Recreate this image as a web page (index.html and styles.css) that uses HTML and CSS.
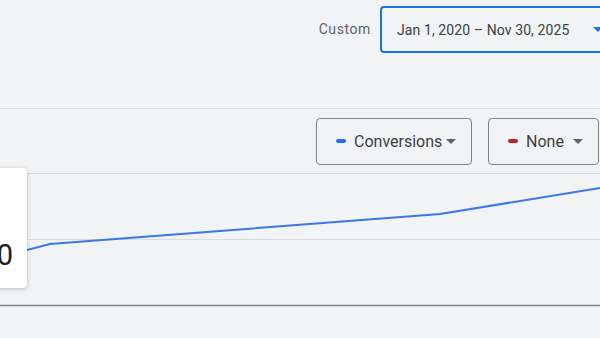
FILE: index.html
```html
<!DOCTYPE html>
<html lang="en">
<head>
    <meta charset="UTF-8">
    <meta name="viewport" content="width=device-width, initial-scale=1.0">
    <title>Conversions report</title>
    <link rel="stylesheet" href="styles.css">
</head>
<body>
    <div class="topbar">
        <span class="range-label">Custom</span>
        <div class="date-picker">
            <span>Jan 1, 2020 – Nov 30, 2025</span>
            <span class="caret caret-blue"></span>
        </div>
    </div>

    <div class="chart-panel">
        <div class="controls">
            <div class="metric-select">
                <span class="swatch swatch-blue"></span>
                <span>Conversions</span>
                <span class="caret"></span>
            </div>
            <div class="metric-select metric-none">
                <span class="swatch swatch-red"></span>
                <span>None</span>
                <span class="caret"></span>
            </div>
        </div>

        <div class="chart">
            <svg class="plot" width="600" height="166" viewBox="0 0 600 166">
                <line x1="0" y1="0.5" x2="600" y2="0.5" class="grid"/>
                <line x1="0" y1="66.5" x2="600" y2="66.5" class="grid"/>
                <line x1="0" y1="132.5" x2="600" y2="132.5" class="axis"/>
                <polyline class="series" points="0,84 50,71 440,41 600,15"/>
            </svg>
            <div class="tooltip">
                <span class="tooltip-value">0</span>
            </div>
        </div>
    </div>
</body>
</html>
```

FILE: styles.css
```css
body {
    margin: 0;
    width: 600px;
    height: 338px;
    overflow: hidden;
    background-color: #f1f3f4;
    font-family: Roboto, "Liberation Sans", sans-serif;
    color: #3c4043;
}
.topbar {
    height: 109px;
    display: flex;
    justify-content: flex-end;
    align-items: flex-start;
    gap: 9px;
    padding-top: 6px;
    box-sizing: border-box;
    border-bottom: 1px solid #dadce0;
    margin-right: -40px;
}
.range-label {
    margin-top: 15px;
    font-size: 14px;
    letter-spacing: 0.6px;
    color: #5f6368;
}
.date-picker {
    width: 260px;
    height: 47px;
    box-sizing: border-box;
    border: 2px solid #1a73e8;
    border-radius: 4px;
    display: flex;
    align-items: center;
    gap: 24px;
    padding-left: 15px;
    font-size: 14px;
    letter-spacing: 0.1px;
    flex-shrink: 0;
}
.caret {
    width: 0;
    height: 0;
    border-left: 5px solid transparent;
    border-right: 5px solid transparent;
    border-top: 5px solid #5f6368;
}
.caret-blue {
    border-top-color: #1a73e8;
}
.controls {
    height: 64px;
    display: flex;
    justify-content: flex-end;
    align-items: center;
    gap: 16px;
    padding-right: 1px;
}
.metric-select {
    width: 156px;
    height: 47px;
    box-sizing: border-box;
    border: 1px solid #80868b;
    border-radius: 4px;
    display: flex;
    align-items: center;
    padding-left: 19px;
    font-size: 16px;
}
.metric-select .caret {
    margin-left: auto;
    margin-right: 15px;
}
.metric-none {
    width: 111px;
}
.swatch {
    width: 10px;
    height: 4px;
    border-radius: 2px;
    margin-right: 8px;
}
.swatch-blue {
    background-color: #1a73e8;
}
.swatch-red {
    background-color: #c5221f;
}
.chart {
    position: relative;
    height: 166px;
}
.plot {
    display: block;
}
.grid {
    stroke: #dadce0;
    stroke-width: 1;
}
.axis {
    stroke: #80868b;
    stroke-width: 1.5;
}
.series {
    fill: none;
    stroke: #3b78e7;
    stroke-width: 2;
}
.tooltip {
    position: absolute;
    left: -60px;
    top: -5px;
    width: 87px;
    height: 120px;
    box-sizing: border-box;
    background: #fff;
    border-radius: 4px;
    box-shadow: 0 1px 4px rgba(60, 64, 67, 0.3);
    display: flex;
    justify-content: flex-end;
    align-items: flex-end;
    padding: 0 14px 18px 0;
}
.tooltip-value {
    font-size: 29px;
    line-height: 1;
    color: #202124;
}
```
